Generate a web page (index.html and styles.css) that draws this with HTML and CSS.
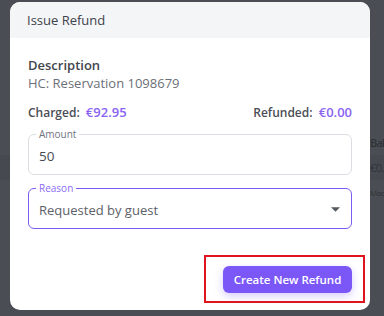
FILE: index.html
```html
<!DOCTYPE html>
<html lang="en">
<head>
    <meta charset="UTF-8">
    <meta name="viewport" content="width=device-width, initial-scale=1.0">
    <title>Issue Refund</title>
    <link rel="stylesheet" href="styles.css">
</head>
<body>
    <div class="page">
        <div class="page-row"><span class="ghost big">Bal</span></div>
        <div class="page-row band"><span class="ghost">€0.</span></div>
        <div class="page-row"><span class="ghost small">Mad</span></div>
    </div>
    <div class="modal">
        <div class="modal-header">Issue Refund</div>
        <div class="modal-body">
            <div class="label-title">Description</div>
            <div class="desc">HC: Reservation 1098679</div>
            <div class="totals">
                <div><span class="key">Charged:</span> <span class="money">€92.95</span></div>
                <div><span class="key">Refunded:</span> <span class="money">€0.00</span></div>
            </div>
            <div class="field">
                <span class="field-label">Amount</span>
                <div class="value">50</div>
            </div>
            <div class="field focused">
                <span class="field-label">Reason</span>
                <div class="value">Requested by guest</div>
                <svg class="caret" width="9" height="5" viewBox="0 0 10 5"><path d="M0 0h10L5 5z" fill="#555a61"/></svg>
            </div>
            <div class="actions">
                <div class="highlight">
                    <button class="btn">Create New Refund</button>
                </div>
            </div>
        </div>
    </div>
</body>
</html>
```

FILE: styles.css
```css
body {
    margin: 0;
    width: 384px;
    height: 316px;
    overflow: hidden;
    background: #4a4e54;
    font-family: "Open Sans", "DejaVu Sans", sans-serif;
    position: relative;
}
.page {
    padding-top: 130px;
    display: flex;
    flex-direction: column;
}
.page-row {
    height: 25px;
    display: flex;
    align-items: center;
    justify-content: flex-end;
}
.page-row.band {
    background: #464a50;
}
.ghost {
    width: 14px;
    white-space: nowrap;
    color: #2f3338;
    font-size: 11px;
    letter-spacing: -0.5px;
}
.ghost.big {
    font-size: 11px;
    font-weight: 600;
    letter-spacing: -0.8px;
}
.ghost.small {
    font-size: 8px;
}
.modal {
    position: absolute;
    left: 10px;
    top: 2px;
    width: 360px;
    height: 308px;
    background: #fff;
    border-radius: 10px;
    overflow: hidden;
}
.modal-header {
    background: #f4f5f7;
    height: 36px;
    padding-left: 17px;
    display: flex;
    align-items: center;
    font-size: 13px;
    font-weight: 500;
    color: #3d424b;
}
.modal-body {
    padding: 18px 18px 0 18px;
}
.label-title {
    font-size: 13px;
    font-weight: 600;
    color: #41454d;
    line-height: 18px;
}
.desc {
    font-size: 13px;
    color: #6c7078;
    line-height: 18px;
}
.totals {
    display: flex;
    justify-content: space-between;
    margin-top: 11px;
    line-height: 16px;
}
.key {
    font-size: 12px;
    font-weight: 600;
    color: #4b4e56;
}
.money {
    font-size: 13px;
    font-weight: 600;
    color: #8a63f5;
    margin-left: 2px;
}
.field {
    position: relative;
    margin-top: 13px;
    height: 39px;
    padding: 0 10px;
    border: 1px solid #dcdde2;
    border-radius: 6px;
    display: flex;
    align-items: center;
    justify-content: space-between;
}
.field-label {
    position: absolute;
    left: 7px;
    top: -7px;
    padding: 0 3px;
    background: #fff;
    font-size: 10px;
    line-height: 12px;
    color: #707480;
}
.field .value {
    font-size: 13.5px;
    color: #45494f;
    margin-top: 2px;
}
.field.focused {
    margin-top: 13px;
    border-color: #7b5cf0;
}
.field.focused .field-label {
    color: #8b6cf5;
}
.field.focused .value {
    font-size: 13px;
    color: #5c6068;
}
.caret {
    margin-right: 1px;
    margin-top: 2px;
}
.actions {
    display: flex;
    justify-content: flex-end;
    margin-top: 26px;
    margin-right: -13px;
}
.highlight {
    border: 2px solid #e0141e;
    padding: 9px 11px 8px 17px;
}
.btn {
    display: block;
    border: none;
    background: #7b57f7;
    color: #fff;
    font-family: inherit;
    font-size: 11.5px;
    font-weight: 600;
    height: 27px;
    width: 129px;
    padding: 0;
    border-radius: 6px;
    box-shadow: 0 3px 8px rgba(123, 87, 247, 0.3);
}
```
